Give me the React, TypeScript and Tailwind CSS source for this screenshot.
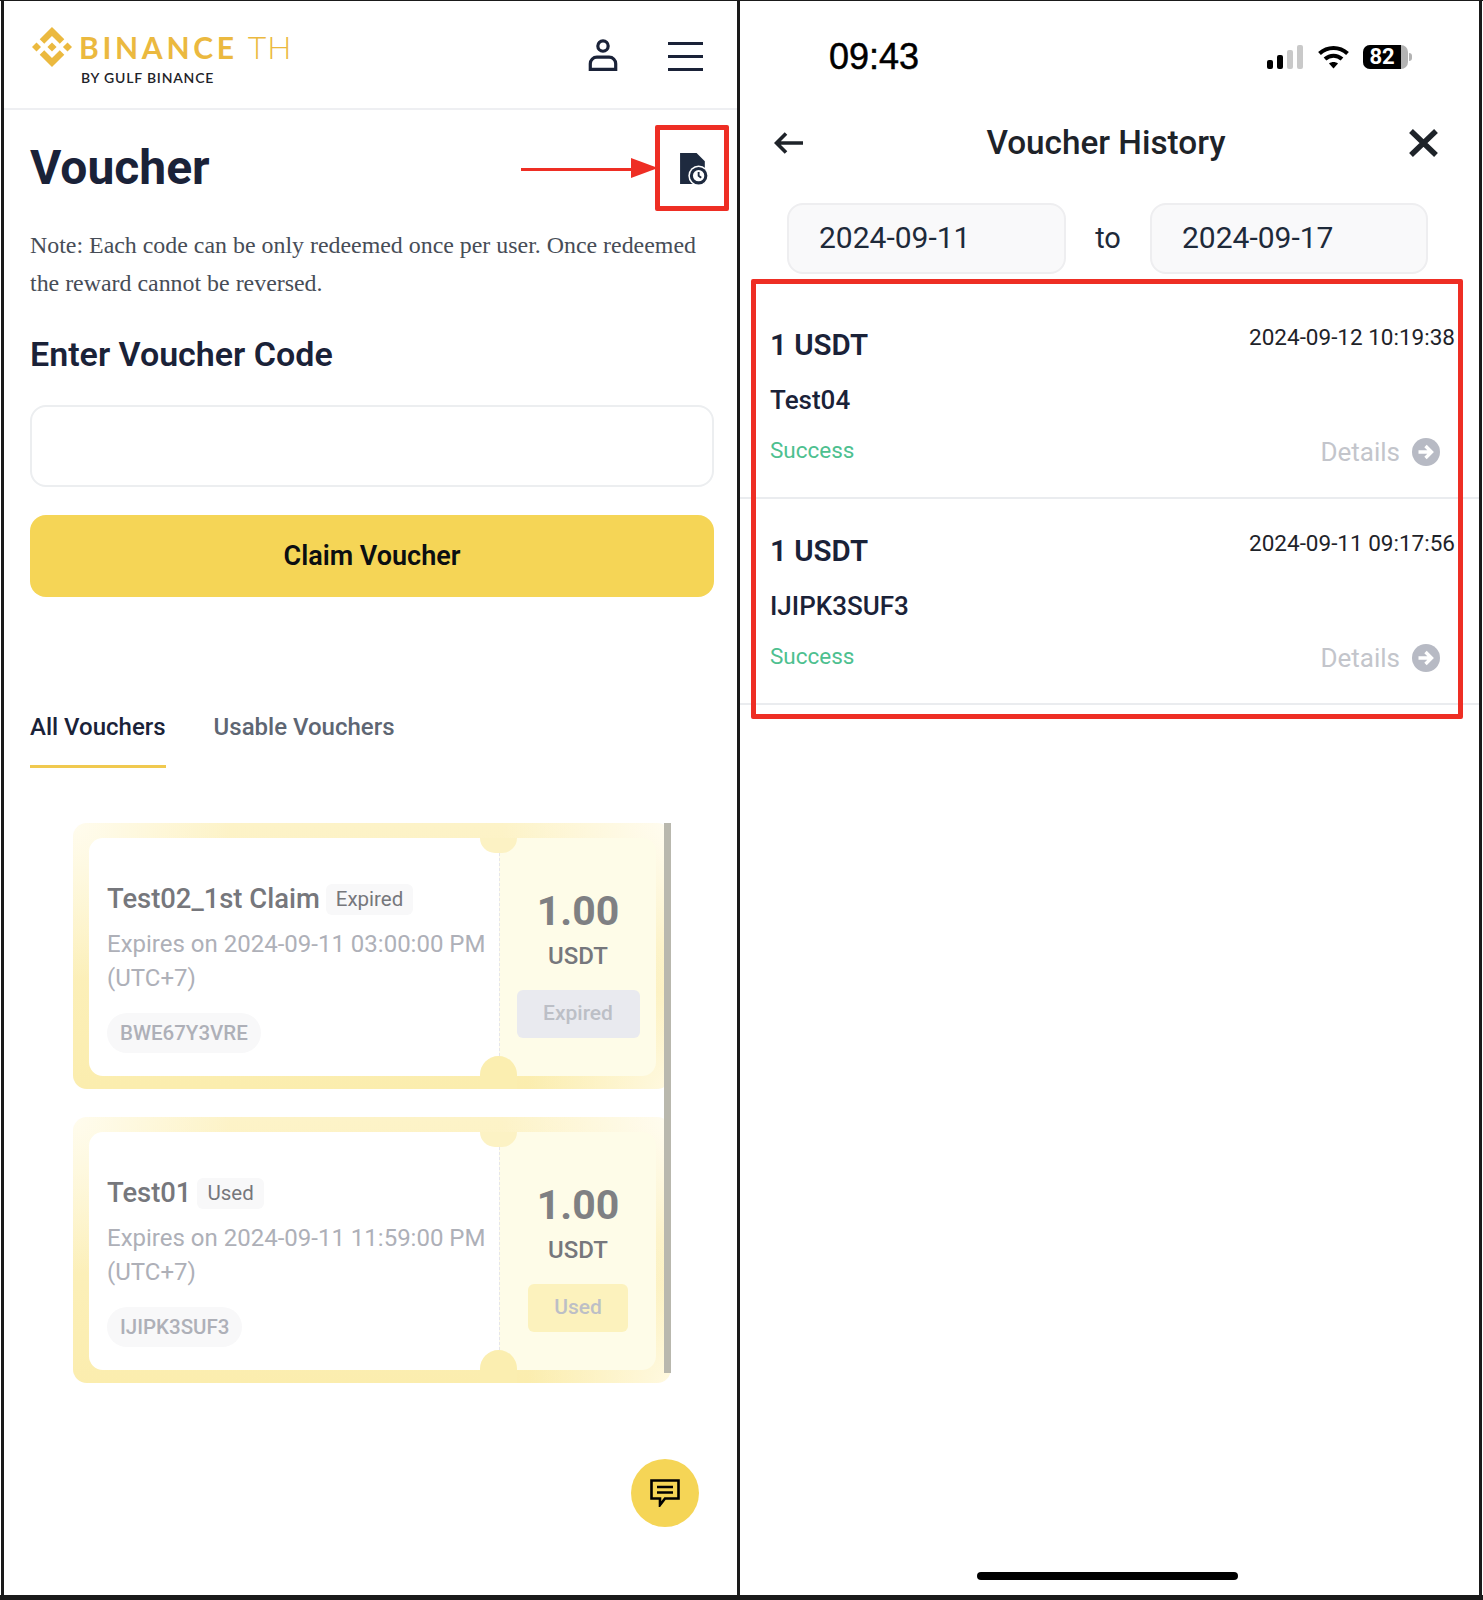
import React from "react";

const BinanceMark = () => (
  <svg viewBox="0 0 126.61 126.61" className="h-10 w-10 shrink-0" fill="#ebb93f">
    <path d="M38.73 53.2 63.3 28.62l24.62 24.6 14.3-14.31L63.3 0 24.42 38.89z" />
    <path d="M0 63.31 14.3 49l14.31 14.31L14.3 77.61z" />
    <path d="M38.73 73.42 63.3 98l24.62-24.6 14.31 14.29L63.3 126.61 24.42 87.73z" />
    <path d="M98 63.31 112.3 49l14.31 14.31-14.31 14.3z" />
    <path d="M77.83 63.3 63.3 48.78 48.81 63.27 63.3 77.83z" />
  </svg>
);

const UserIcon = () => (
  <svg viewBox="0 0 32 34" className="h-8 w-8" fill="none" stroke="#1a2238" strokeWidth="3.4">
    <circle cx="16" cy="7.5" r="5.5" />
    <path d="M2.5 32.3v-6a7 7 0 0 1 7-7h13a7 7 0 0 1 7 7v6z" />
  </svg>
);

const HistoryIcon = () => (
  <svg viewBox="0 0 28 32" className="h-[33px] w-[29px]">
    <path d="M0 0h16l8 8v22H0z" fill="#1e2a3f" />
    <circle cx="18" cy="22" r="10" fill="#fff" />
    <circle cx="18" cy="22" r="8.500" fill="#1e2a3f" />
    <circle cx="18" cy="22" r="5.500" fill="#fff" />
    <path d="M18 18.500V22l2.500 2" fill="none" stroke="#1e2a3f" strokeWidth="1.8" />
  </svg>
);

const ChatIcon = () => (
  <svg viewBox="0 0 30 28" className="h-7 w-[30px]" fill="none" stroke="#000" strokeWidth="2.6">
    <path d="M1.500 1.500h27v18H15L10 26v-6.500H1.500z" />
    <path d="M7 8h16M7 13.500h16" />
  </svg>
);

const ArrowCircle = () => (
  <svg viewBox="0 0 28 28" className="h-7 w-7">
    <circle cx="14" cy="14" r="14" fill="#b7bac4" />
    <path d="M6.500 14h12M13.500 8l6 6-6 6" fill="none" stroke="#fff" strokeWidth="3.4" />
  </svg>
);

const StatusIcons = () => (
  <div className="flex items-center">
    <svg viewBox="0 0 36 24" className="h-6 w-9">
      <rect x="0" y="15" width="6" height="9" rx="2" fill="#000" />
      <rect x="10" y="10" width="6" height="14" rx="2" fill="#000" />
      <rect x="20" y="5" width="6" height="19" rx="2" fill="#c9c9c9" />
      <rect x="30" y="0" width="6" height="24" rx="2" fill="#c9c9c9" />
    </svg>
    <svg viewBox="0 0 32 24" className="ml-[14px] h-6 w-[33px]" fill="none" stroke="#000" strokeWidth="4">
      <path d="M2 8.500C10 1 22 1 30 8.500" />
      <path d="M7.500 14c5-4.500 12-4.500 17 0" />
      <path d="M16 23.500 11.500 18.500c2.500-2 6.500-2 9 0z" fill="#000" stroke="none" />
    </svg>
    <div className="ml-[13px] flex items-center">
      <div className="flex h-6 w-[45px] overflow-hidden rounded-[7px] bg-[#b3b3b3]">
        <div className="flex h-6 w-[38px] items-center justify-center bg-black font-['Roboto'] text-[22px] font-bold leading-6 text-white">
          82
        </div>
      </div>
      <div className="ml-px h-2 w-[3px] rounded-r bg-[#b3b3b3]" />
    </div>
  </div>
);

type TicketProps = {
  title: string;
  badge: string;
  expires: string;
  code: string;
  buttonClass: string;
};

const Ticket = ({ title, badge, expires, code, buttonClass }: TicketProps) => (
  <div className="relative h-[266px] w-[598px] rounded-[14px] bg-[radial-gradient(circle_at_0%_0%,#fffcee_0%,#fffcee00_24%),radial-gradient(circle_at_100%_0%,#fffcf0_0%,#fffcf000_26%),radial-gradient(circle_at_100%_100%,#fff9e0_0%,#fff9e000_22%),linear-gradient(0deg,#fbedae_0%,#fcf0bc_55%,#fdf3c8_100%)] pb-[13px] pl-4 pr-[15px] pt-[15px]">
    <div className="flex h-[238px] overflow-hidden rounded-[14px]">
      <div className="w-[410px] bg-white pl-[18px] pt-[46px]">
        <div className="flex items-center gap-[6px]">
          <span className="text-[27.400px] font-medium leading-[31px] text-[#76777c]">{title}</span>
          <span className="flex h-[31px] items-center rounded-md bg-[#f8f8f9] px-[10px] text-[20.500px] text-[#76777c]">
            {badge}
          </span>
        </div>
        <p className="mt-3 text-[24px] leading-[34px] text-[#aeb0b8]">
          {expires}
          <br />
          (UTC+7)
        </p>
        <span className="mt-[18px] inline-flex h-10 items-center rounded-full bg-[#f8f8f9] px-[13px] text-[20.500px] font-medium text-[#aeb0b8]">
          {code}
        </span>
      </div>
      <div className="flex flex-1 flex-col items-center border-l border-dashed border-[#e6e6ea] bg-[#fefce8] pt-[49px]">
        <div className="text-[41px] font-bold leading-[48px] text-[#7f8083]">1.00</div>
        <div className="mt-[6px] text-[24px] font-medium leading-[30px] text-[#76777c]">USDT</div>
        <div className={`mt-[19px] flex h-12 items-center justify-center rounded-md text-[21px] font-medium text-[#bcbfc6] ${buttonClass}`}>
          {badge}
        </div>
      </div>
    </div>
    <div className="absolute left-[407px] top-[15px] h-[15px] w-[37px] rounded-b-full bg-[#fcf2c4]" />
    <div className="absolute left-[407px] top-[233px] h-[33px] w-[37px] rounded-t-full bg-[#fbeeb0]" />
  </div>
);

const HistoryRow = ({ code, date }: { code: string; date: string }) => (
  <div className="h-[206px] border-b-2 border-[#eaecef] pl-[30px] pr-[24px] pt-7">
    <div className="flex items-start justify-between">
      <span className="mt-[6px] text-[29.500px] font-semibold leading-9 text-[#1a2238]">1 USDT</span>
      <span className="text-[22.500px] leading-8 text-[#1e2329]">{date}</span>
    </div>
    <div className="mt-[22px] text-[26px] font-medium leading-[30px] text-[#1a2238]">{code}</div>
    <div className="mt-5 flex items-start justify-between pr-[15px]">
      <span className="text-[22.500px] leading-[30px] text-[#4dc08f]">Success</span>
      <span className="mt-[2px] flex items-center gap-3 text-[26px] leading-[30px] text-[#c3c5cb]">
        Details
        <ArrowCircle />
      </span>
    </div>
  </div>
);

export default function App() {
  return (
    <div className="flex h-[1600px] w-[1483px] border-b-[5px] border-t border-[#1a1a1a] bg-white font-['Roboto',sans-serif]">
      {/* left phone */}
      <section className="relative ml-px w-[736px] shrink-0 border-l-[3px] border-[#1a1a1a]">
        <header className="flex h-[109px] items-center justify-between border-b-2 border-[#eeeff2] pl-7 pr-[34px]">
          <div className="mt-1">
            <div className="flex items-center">
              <BinanceMark />
              <span className="ml-[7px] font-['Lato'] text-[30px] font-bold leading-none tracking-[3.7px] text-[#ebb93f]">BINANCE</span>
              <span className="ml-[10px] font-['Lato'] text-[32px] font-light leading-none tracking-[1px] text-[#ebb93f]">TH</span>
            </div>
            <div className="ml-[49px] mt-[3px] font-['Lato'] text-[14px] font-semibold leading-4 tracking-[0.8px] text-[#1e2329]">BY GULF BINANCE</div>
          </div>
          <div className="flex items-center gap-[49px]">
            <UserIcon />
            <div className="mt-[3px] flex h-[29px] w-[35px] flex-col justify-between">
              <div className="h-[3px] bg-[#1a2238]" />
              <div className="h-[3px] bg-[#1a2238]" />
              <div className="h-[3px] bg-[#1a2238]" />
            </div>
          </div>
        </header>

        <main className="pl-[26px] pr-[28px]">
          <div className="relative mt-[30px] flex h-14 items-center justify-between">
            <h1 className="text-[48px] font-bold leading-[56px] text-[#1a2238]">Voucher</h1>
            <div className="mt-[2px]">
              <HistoryIcon />
            </div>
            {/* red annotation */}
            <div className="absolute left-[491px] top-[28px] h-[3px] w-[112px] bg-[#ee2e24]" />
            <div className="absolute left-[601px] top-[18px] h-0 w-0 border-y-[10px] border-l-[27px] border-y-transparent border-l-[#ee2e24]" />
            <div className="absolute left-[625px] top-[-15px] h-[86px] w-[74px] rounded-[2px] border-[5px] border-[#ee2e24]" />
          </div>

          <p className="mt-[30px] font-['Liberation_Serif',serif] text-[23.900px] leading-[38px] text-[#474d57]">
            Note: Each code can be only redeemed once per user. Once redeemed
            <br />
            the reward cannot be reversed.
          </p>

          <h2 className="mt-8 text-[34px] font-semibold leading-10 text-[#1a2238]">Enter Voucher Code</h2>
          <div className="mt-[31px] h-[82px] w-[684px] rounded-2xl border-2 border-[#eceef0]" />
          <button className="mt-7 h-[82px] w-[684px] rounded-2xl bg-[#f5d556] text-[27px] font-semibold text-[#0b0e11]">
            Claim Voucher
          </button>

          <div className="mt-[115px] flex gap-12">
            <div className="border-b-[3px] border-[#f0c94f] pb-[23px] text-[24px] font-medium leading-[30px] text-[#1a2238]">All Vouchers</div>
            <div className="text-[24px] font-medium leading-[30px] text-[#5e6673]">Usable Vouchers</div>
          </div>

          <div className="relative ml-[43px] mt-[55px] flex flex-col gap-7">
            <Ticket
              title="Test02_1st Claim"
              badge="Expired"
              expires="Expires on 2024-09-11 03:00:00 PM"
              code="BWE67Y3VRE"
              buttonClass="w-[123px] bg-[#e9eaef]"
            />
            <Ticket
              title="Test01"
              badge="Used"
              expires="Expires on 2024-09-11 11:59:00 PM"
              code="IJIPK3SUF3"
              buttonClass="w-[100px] bg-[#fcf2bd]"
            />
            {/* scrollbar */}
            <div className="absolute left-[591px] top-0 h-[550px] w-[7px] bg-[#b9b8ae]" />
          </div>
        </main>

        <div className="absolute left-[627px] top-[1458px] flex h-[68px] w-[68px] items-center justify-center rounded-full bg-[#f5d556]">
          <ChatIcon />
        </div>
      </section>

      {/* right phone */}
      <section className="flex w-[745px] shrink-0 flex-col border-x-[3px] border-[#1a1a1a]">
        <div className="flex h-[111px] items-center justify-between pl-[89px] pr-[67px]">
          <span className="font-['Liberation_Sans'] text-[36px] leading-none text-black [-webkit-text-stroke:0.5px_#000]">09:43</span>
          <StatusIcons />
        </div>
        <div className="flex h-[62px] items-center justify-between pl-[34px] pr-[41px]">
          <svg viewBox="0 0 29 22" className="h-[22px] w-[29px]" fill="none" stroke="#1e2329" strokeWidth="3.6">
            <path d="M29 11H3M12 1.500 2.500 11l9.500 9.500" />
          </svg>
          <h3 className="text-[33.300px] font-medium leading-10 text-[#1e2329]">Voucher History</h3>
          <svg viewBox="0 0 29 28" className="h-7 w-[29px]" fill="none" stroke="#1e2329" strokeWidth="5.500">
            <path d="m2 2 25 24M27 2 2 26" />
          </svg>
        </div>
        <div className="mt-[29px] flex items-center pl-[47px]">
          <div className="flex h-[71px] w-[279px] items-center rounded-2xl border-2 border-[#eeeef0] bg-[#f9f9fa] pb-[3px] pl-[30px] text-[30px] text-[#1e2a3a]">2024-09-11</div>
          <div className="w-[84px] text-center text-[29px] text-[#1e2a3a]">to</div>
          <div className="flex h-[71px] w-[278px] items-center rounded-2xl border-2 border-[#eeeef0] bg-[#f9f9fa] pb-[3px] pl-[30px] text-[30px] text-[#1e2a3a]">2024-09-17</div>
        </div>
        <div className="relative mt-[19px]">
          <HistoryRow code="Test04" date="2024-09-12 10:19:38" />
          <HistoryRow code="IJIPK3SUF3" date="2024-09-11 09:17:56" />
          <div className="absolute left-[11px] top-[-14px] h-[440px] w-[712px] rounded-[2px] border-[5px] border-[#ee2e24]" />
        </div>
        <div className="mb-[15px] ml-[237px] mt-auto h-2 w-[261px] rounded-full bg-black" />
      </section>
    </div>
  );
}
